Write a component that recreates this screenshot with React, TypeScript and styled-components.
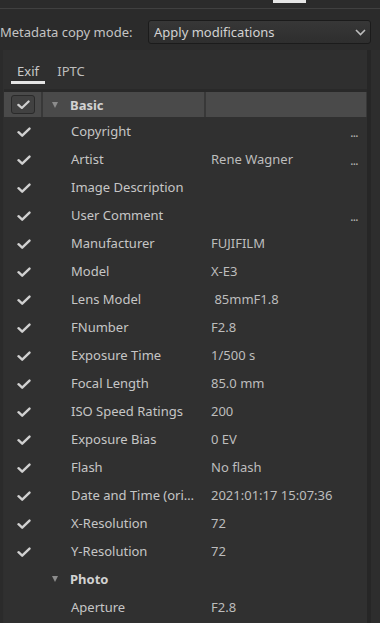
import styled, { createGlobalStyle } from 'styled-components';

const GlobalStyle = createGlobalStyle`
  html, body {
    margin: 0;
    padding: 0;
    background: #2b2b2b;
    font-family: "Noto Sans", "Open Sans", sans-serif;
    font-size: 13px;
    color: #c6c6c6;
  }
`;

const Page = styled.div`
  width: 380px;
  height: 623px;
  overflow: hidden;
  display: flex;
  flex-direction: column;
`;

const TopBar = styled.div`
  height: 8px;
  border-bottom: 1px solid #404040;
  padding-left: 273px;
`;

const TabMarker = styled.div`
  width: 33px;
  height: 3px;
  background: #e6e6e6;
`;

const ModeRow = styled.div`
  display: flex;
  align-items: center;
  margin-top: 11px;
  height: 24px;
`;

const ModeLabel = styled.span`
  width: 148px;
  color: #c4c4c4;
  white-space: nowrap;
`;

const Combo = styled.div`
  width: 223px;
  height: 24px;
  box-sizing: border-box;
  border: 1px solid #1b1b1b;
  border-radius: 3px;
  background: linear-gradient(#373737, #2e2e2e);
  display: flex;
  align-items: center;
  justify-content: space-between;
  padding: 0 4px 0 5px;
  color: #d2d2d2;
`;

const Body = styled.div`
  display: flex;
  margin-top: 6px;
  flex: 1;
`;

const Panel = styled.div`
  margin-left: 3px;
  width: 364px;
  background: #2f2f2f;
  display: flex;
  flex-direction: column;
`;

const Gutter = styled.div`
  width: 4px;
  background: #262626;
`;

const ScrollTrack = styled.div`
  flex: 1;
  background: #2d2d2d;
`;

const TabBar = styled.div`
  height: 39px;
  display: flex;
  align-items: flex-start;
  gap: 9px;
  padding-left: 8px;
`;

const Tab = styled.div<{ $active?: boolean }>`
  min-width: 34px;
  padding: 12px 3px 1px;
  box-sizing: border-box;
  text-align: center;
  line-height: 18px;
  color: ${({ $active }) => ($active ? '#cacaca' : '#bdbdbd')};
  border-bottom: 3px solid ${({ $active }) => ($active ? '#e4e4e4' : 'transparent')};
`;

const Tree = styled.div`
  margin-left: 1px;
  border-top: 3px solid #292929;
  background: #303030;
  flex: 1;
`;

const HeaderRow = styled.div`
  display: grid;
  grid-template-columns: 37px 161px 160px;
  column-gap: 2px;
  height: 25px;
  background: #383838;
`;

const HeaderCell = styled.div`
  background: #4a4a4a;
  display: flex;
  align-items: center;
`;

const CheckBox = styled.div`
  margin-left: 7px;
  width: 24px;
  height: 19px;
  box-sizing: border-box;
  border: 1px solid #2a2a2a;
  border-radius: 3px;
  background: #414141;
  display: flex;
  align-items: center;
  justify-content: center;
`;

const Row = styled.div`
  display: grid;
  grid-template-columns: 37px 161px 160px;
  column-gap: 2px;
  height: 28px;
  align-items: center;
`;

const CheckCell = styled.div`
  display: flex;
  align-items: center;
  padding-left: 13px;
  padding-top: 3px;
`;

const NameCell = styled.div<{ $group?: boolean }>`
  display: flex;
  align-items: center;
  padding-left: ${({ $group }) => ($group ? '9px' : '28px')};
  font-weight: ${({ $group }) => ($group ? 700 : 400)};
  color: ${({ $group }) => ($group ? '#d2d2d2' : '#c6c6c6')};
  white-space: nowrap;
  overflow: hidden;
`;

const Arrow = styled.span`
  width: 0;
  height: 0;
  border-left: 3.5px solid transparent;
  border-right: 3.5px solid transparent;
  border-top: 6px solid #8c8c8c;
  margin-right: 12px;
`;

const ValueCell = styled.div`
  display: flex;
  align-items: center;
  justify-content: space-between;
  padding: 0 8px 0 5px;
  color: #bdbdbd;
  white-space: pre;
`;

const More = styled.span`
  font-size: 12px;
  letter-spacing: -0.6px;
  color: #b4b4b4;
  padding-top: 2px;
`;

function Check({ size = 14 }: { size?: number }) {
  return (
    <svg width={size} height={size * 0.72} viewBox="0 0 14 10" fill="none">
      <path d="M1.5 5.2 L5.2 8.6 L12.5 1.5" stroke="#d0d0d0" strokeWidth="2.4" strokeLinecap="round" strokeLinejoin="round" />
    </svg>
  );
}

function Chevron() {
  return (
    <svg width="11" height="7" viewBox="0 0 11 7" fill="none">
      <path d="M1 1 L5.5 5.5 L10 1" stroke="#bdbdbd" strokeWidth="1.6" />
    </svg>
  );
}

type Entry = { name: string; value?: string; more?: boolean; group?: boolean; checked?: boolean };

const entries: Entry[] = [
  { name: 'Copyright', more: true, checked: true },
  { name: 'Artist', value: 'Rene Wagner', more: true, checked: true },
  { name: 'Image Description', checked: true },
  { name: 'User Comment', more: true, checked: true },
  { name: 'Manufacturer', value: 'FUJIFILM', checked: true },
  { name: 'Model', value: 'X-E3', checked: true },
  { name: 'Lens Model', value: ' 85mmF1.8', checked: true },
  { name: 'FNumber', value: 'F2.8', checked: true },
  { name: 'Exposure Time', value: '1/500 s', checked: true },
  { name: 'Focal Length', value: '85.0 mm', checked: true },
  { name: 'ISO Speed Ratings', value: '200', checked: true },
  { name: 'Exposure Bias', value: '0 EV', checked: true },
  { name: 'Flash', value: 'No flash', checked: true },
  { name: 'Date and Time (ori\u2026', value: '2021:01:17 15:07:36', checked: true },
  { name: 'X-Resolution', value: '72', checked: true },
  { name: 'Y-Resolution', value: '72', checked: true },
  { name: 'Photo', group: true },
  { name: 'Aperture', value: 'F2.8' },
];

export default function App() {
  return (
    <Page>
      <GlobalStyle />
      <TopBar>
        <TabMarker />
      </TopBar>
      <ModeRow>
        <ModeLabel>Metadata copy mode:</ModeLabel>
        <Combo>
          <span>Apply modifications</span>
          <Chevron />
        </Combo>
      </ModeRow>
      <Body>
        <Panel>
          <TabBar>
            <Tab $active>Exif</Tab>
            <Tab>IPTC</Tab>
          </TabBar>
          <Tree>
            <HeaderRow>
              <HeaderCell>
                <CheckBox>
                  <Check size={13} />
                </CheckBox>
              </HeaderCell>
              <HeaderCell>
                <NameCell $group>
                  <Arrow />
                  Basic
                </NameCell>
              </HeaderCell>
              <HeaderCell />
            </HeaderRow>
            {entries.map((e) => (
              <Row key={e.name}>
                <CheckCell>{e.checked && <Check />}</CheckCell>
                <NameCell $group={e.group}>
                  {e.group && <Arrow />}
                  {e.name}
                </NameCell>
                <ValueCell>
                  <span>{e.value}</span>
                  {e.more && <More>...</More>}
                </ValueCell>
              </Row>
            ))}
          </Tree>
        </Panel>
        <Gutter />
        <ScrollTrack />
      </Body>
    </Page>
  );
}
